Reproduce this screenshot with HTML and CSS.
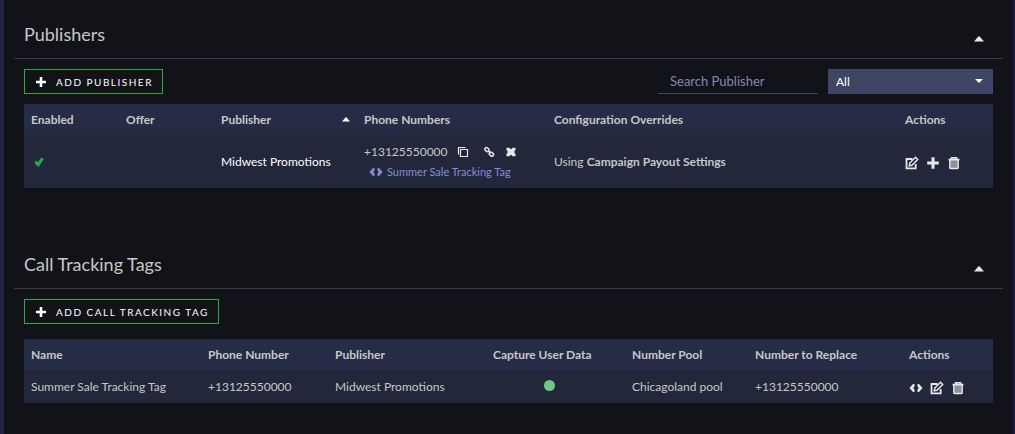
FILE: index.html
```
<!DOCTYPE html>
<html lang="en">
  <head>
    <meta charset="UTF-8" />
    <meta name="viewport" content="width=device-width, initial-scale=1.0" />
    <title>Campaign</title>
    <link rel="stylesheet" href="styles.css">
  </head>
  <body>
    <svg class="sprite" aria-hidden="true">
      <symbol id="plus" viewBox="0 0 12 12"><path d="M4.700 1h2.600v3.700H11v2.600H7.300V11H4.700V7.300H1V4.700h3.700z" /></symbol>
      <symbol id="caret-up" viewBox="0 0 10 6"><path d="M0 5.500 4.300 .6q.7-.6 1.400 0L10 5.500z" /></symbol>
      <symbol id="caret-down" viewBox="0 0 10 6"><path d="M1 1h8L5 5z" /></symbol>
      <symbol id="check" viewBox="0 0 10 10"><path d="M.3 5.500 2.200 3.600 4 5.300 7.300 .5 9.800 2 5 9.500H3.600z" /></symbol>
      <symbol id="copy" viewBox="0 0 12 12"><path d="M3.500 3.500h7v7h-7zM1.500 8.500v-7h7" fill="none" stroke="currentColor" stroke-width="1.200" /></symbol>
      <symbol id="link" viewBox="0 0 12 12">
        <g fill="none" stroke="currentColor" stroke-width="1.500">
          <rect x="1.700" y="2" width="4.400" height="3.200" rx="1.500" transform="rotate(40 4 3.600)" />
          <rect x="6.200" y="6.600" width="4.400" height="3.200" rx="1.500" transform="rotate(40 8.400 8.200)" />
          <path d="m5 4.800 2.500 2.300" />
        </g>
      </symbol>
      <symbol id="times" viewBox="0 0 12 12"><path d="M1.500 1.700h3L6 3.400l1.500-1.700h3v2.600L8.900 6l1.600 1.700v2.600h-3L6 8.600l-1.500 1.700h-3V7.700L3.100 6 1.500 4.300z" /></symbol>
      <symbol id="code" viewBox="0 0 14 10"><path d="M5.500 1H4L.5 5 4 9h1.500V6.500L4.200 5l1.300-1.500zM8.500 1H10l3.500 4L10 9H8.500V6.500L9.800 5 8.500 3.500z" /></symbol>
      <symbol id="edit" viewBox="0 0 14 14">
        <path d="M7.500 3H1.500v9.300h9.200V8" fill="none" stroke="currentColor" stroke-width="1.800" />
        <path d="m4.300 9.700.5-2.700 5.700-5.700 2.200 2.200L7 9.200z" fill="none" stroke="currentColor" stroke-width="1.500" />
      </symbol>
      <symbol id="trash" viewBox="0 0 12 14">
        <path d="M2.500 4h7v8h-7z" opacity=".55" />
        <path d="M.5 3.600h11M3.500 3V1.700h5V3M1.900 4v7.400q0 1.100 1.100 1.100h6q1.100 0 1.100-1.100V4" fill="none" stroke="currentColor" stroke-width="1.600" />
      </symbol>
    </svg>

    <main class="page">
      <section class="panel">
        <header class="panel-header">
          <h2 class="panel-title">Publishers</h2>
          <button class="icon-btn toggle" aria-label="Collapse publishers"><svg class="caret"><use href="#caret-up" /></svg></button>
        </header>
        <div class="panel-body">
          <div class="toolbar">
            <button class="add-btn"><svg class="icon"><use href="#plus" /></svg>ADD PUBLISHER</button>
            <div class="filters">
              <input class="search" type="text" placeholder="Search Publisher" aria-label="Search Publisher" />
              <div class="select-wrap">
                <select class="filter" aria-label="Filter publishers">
                  <option>All</option>
                </select>
                <svg class="select-caret"><use href="#caret-down" /></svg>
              </div>
            </div>
          </div>
          <table class="grid publishers">
            <colgroup>
              <col class="col-enabled" />
              <col class="col-offer" />
              <col class="col-publisher" />
              <col class="col-phones" />
              <col />
              <col class="col-actions" />
            </colgroup>
            <thead>
              <tr>
                <th>Enabled</th>
                <th>Offer</th>
                <th><div class="sorted">Publisher <svg class="sort"><use href="#caret-up" /></svg></div></th>
                <th>Phone Numbers</th>
                <th>Configuration Overrides</th>
                <th>Actions</th>
              </tr>
            </thead>
            <tbody>
              <tr>
                <td><svg class="check"><use href="#check" /></svg></td>
                <td></td>
                <td class="name">Midwest Promotions</td>
                <td>
                  <div class="phone">
                    <span>+13125550000</span>
                    <button class="icon-btn" aria-label="Copy number"><svg class="icon"><use href="#copy" /></svg></button>
                    <button class="icon-btn link" aria-label="Link number"><svg class="icon"><use href="#link" /></svg></button>
                    <button class="icon-btn" aria-label="Remove number"><svg class="icon"><use href="#times" /></svg></button>
                  </div>
                  <a class="tag" href="#"><svg class="code"><use href="#code" /></svg>Summer Sale Tracking Tag</a>
                </td>
                <td>Using <b>Campaign Payout Settings</b></td>
                <td>
                  <div class="actions">
                    <button class="icon-btn" aria-label="Edit"><svg class="icon-lg"><use href="#edit" /></svg></button>
                    <button class="icon-btn" aria-label="Add"><svg class="icon-lg"><use href="#plus" /></svg></button>
                    <button class="icon-btn" aria-label="Delete"><svg class="icon-lg"><use href="#trash" /></svg></button>
                  </div>
                </td>
              </tr>
            </tbody>
          </table>
        </div>
      </section>

      <section class="panel">
        <header class="panel-header">
          <h2 class="panel-title">Call Tracking Tags</h2>
          <button class="icon-btn toggle" aria-label="Collapse call tracking tags"><svg class="caret"><use href="#caret-up" /></svg></button>
        </header>
        <div class="panel-body spaced">
          <div class="toolbar">
            <button class="add-btn"><svg class="icon"><use href="#plus" /></svg>ADD CALL TRACKING TAG</button>
          </div>
          <table class="grid tags">
            <colgroup>
              <col />
              <col class="col-number" />
              <col class="col-owner" />
              <col class="col-capture" />
              <col class="col-pool" />
              <col class="col-replace" />
              <col class="col-tag-actions" />
            </colgroup>
            <thead>
              <tr>
                <th>Name</th>
                <th>Phone Number</th>
                <th>Publisher</th>
                <th>Capture User Data</th>
                <th>Number Pool</th>
                <th>Number to Replace</th>
                <th>Actions</th>
              </tr>
            </thead>
            <tbody>
              <tr>
                <td>Summer Sale Tracking Tag</td>
                <td>+13125550000</td>
                <td>Midwest Promotions</td>
                <td class="capture"><span class="dot"></span></td>
                <td>Chicagoland pool</td>
                <td>+13125550000</td>
                <td>
                  <div class="actions">
                    <button class="icon-btn" aria-label="Show code"><svg class="code"><use href="#code" /></svg></button>
                    <button class="icon-btn" aria-label="Edit"><svg class="icon-lg"><use href="#edit" /></svg></button>
                    <button class="icon-btn" aria-label="Delete"><svg class="icon-lg"><use href="#trash" /></svg></button>
                  </div>
                </td>
              </tr>
            </tbody>
          </table>
        </div>
      </section>
    </main>
  </body>
</html>
```
FILE: styles.css
```
* {
  box-sizing: border-box;
}

body {
  margin: 0;
  background: #121318;
  color: #c8c8c8;
  font-family: Lato, sans-serif;
  font-size: 12px;
  line-height: 18px;
}

.sprite {
  display: none;
}

svg {
  display: block;
  fill: currentColor;
}

button,
input,
select {
  font-family: inherit;
}

.page {
  min-height: 100vh;
  padding: 12px 10px 0;
  border-left: 4px solid #20263f;
  border-right: 2px solid #171f3a;
}

.panel {
  margin-bottom: 54px;
}

.panel-header {
  display: flex;
  justify-content: space-between;
  align-items: center;
  height: 47px;
  padding: 0 19px 0 10px;
  border-bottom: 1px solid #3b3a42;
}

.panel-title {
  margin: 0;
  padding-bottom: 2px;
  font-size: 18px;
  font-weight: 400;
  line-height: 24px;
}

.icon-btn {
  display: block;
  padding: 0;
  border: none;
  background: none;
  color: #e8e8e8;
  cursor: pointer;
}

.toggle {
  padding-top: 8px;
}

.caret {
  width: 10px;
  height: 6px;
}

.panel-body {
  display: flex;
  flex-direction: column;
  gap: 10px;
  padding: 10px 10px 0;
}

.spaced {
  gap: 15px;
}

.toolbar,
.filters {
  display: flex;
  justify-content: space-between;
  gap: 10px;
}

.add-btn {
  display: flex;
  align-items: center;
  gap: 9px;
  height: 25px;
  padding: 0 9px 0 10px;
  border: 1px solid #28a745;
  background: transparent;
  color: #fff;
  font-size: 10px;
  letter-spacing: 1.5px;
  cursor: pointer;
}

.icon {
  width: 12px;
  height: 12px;
}

.icon-lg {
  width: 14px;
  height: 14px;
}

.code {
  width: 14px;
  height: 10px;
}

.search {
  width: 160px;
  height: 25px;
  padding: 0 12px;
  border: none;
  border-bottom: 1px solid #3f4565;
  background: transparent;
  color: #fff;
  font-size: 13px;
}

.search::placeholder {
  color: #8089b5;
}

.select-wrap {
  position: relative;
}

.filter {
  width: 165px;
  height: 25px;
  padding: 0 8px;
  border: none;
  border-radius: 0;
  background: #3f4565;
  color: #fff;
  font-size: 12px;
  appearance: none;
}

.select-caret {
  position: absolute;
  top: 9px;
  right: 9px;
  width: 10px;
  height: 6px;
  color: #fff;
  pointer-events: none;
}

.grid {
  width: 100%;
  border-collapse: collapse;
  table-layout: fixed;
}

.grid th,
.grid td {
  padding: 0 7px;
  text-align: left;
}

.grid th {
  height: 31px;
  background: #262b46;
  font-weight: 700;
}

.grid td {
  height: 33px;
  background: #22273b;
}

.publishers td {
  height: 53px;
}

.col-enabled,
.col-offer,
.col-actions {
  width: 95px;
}

.col-publisher {
  width: 143px;
}

.col-phones {
  width: 190px;
}

.col-number {
  width: 127px;
}

.col-owner {
  width: 158px;
}

.col-capture {
  width: 139px;
}

.col-pool {
  width: 123px;
}

.col-replace {
  width: 154px;
}

.col-tag-actions {
  width: 91px;
}

.sorted {
  display: flex;
  justify-content: space-between;
  align-items: center;
}

.sort {
  width: 8px;
  height: 5px;
  color: #fff;
}

.check {
  width: 10px;
  height: 10px;
  margin-left: 3px;
  color: #28a745;
}

.grid .name {
  color: #fff;
}

.phone {
  display: flex;
  align-items: center;
  gap: 9px;
  height: 20px;
}

.phone .link {
  padding: 0 1px 0 5px;
}

.tag {
  display: flex;
  align-items: center;
  gap: 4px;
  height: 20px;
  padding-left: 5px;
  color: #8490d6;
  font-size: 11px;
  text-decoration: none;
}

.actions {
  display: flex;
  align-items: center;
  gap: 7px;
  padding-top: 2px;
}

.grid .capture {
  padding-right: 20px;
  padding-bottom: 2px;
}

.dot {
  display: block;
  width: 11px;
  height: 11px;
  margin: 0 auto;
  border-radius: 50%;
  background: #74c686;
}
```
